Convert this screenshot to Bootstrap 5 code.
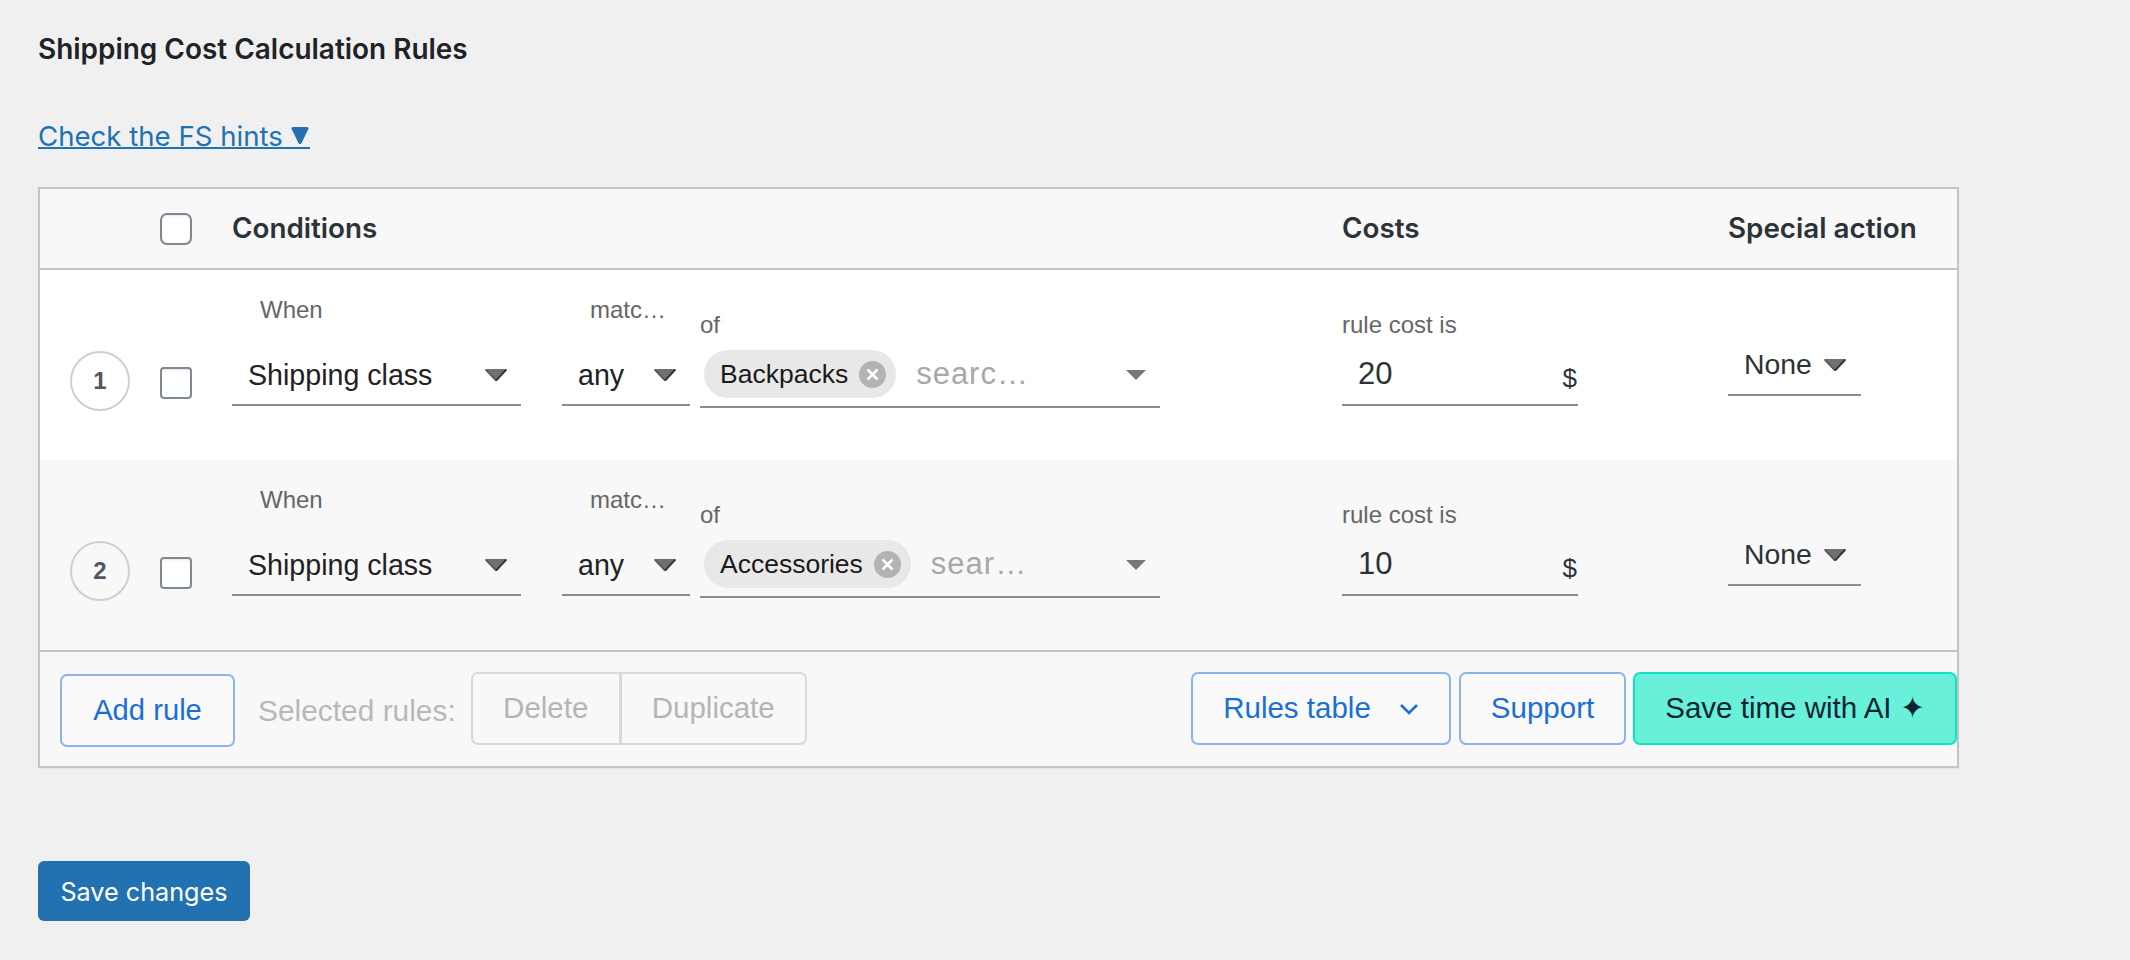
<!DOCTYPE html>
<html lang="en">
<head>
  <meta charset="UTF-8" />
  <meta name="viewport" content="width=device-width, initial-scale=1.0" />
  <title>Shipping Cost Calculation Rules</title>
  <link href="https://cdn.jsdelivr.net/npm/bootstrap@5.3.0/dist/css/bootstrap.min.css" rel="stylesheet">
  <style>
    body {
      background: #f0f0f1;
      color: #1d2327;
      font-family: "Liberation Sans", Arial, sans-serif;
      min-height: 960px;
    }

    .page-wrap {
      padding: 0 0 0 38px;
      width: 1959px;
    }

    .page-title {
      font-family: Inter, sans-serif;
      font-size: 27.95px;
      font-weight: 600;
      line-height: 36px;
      margin: 31px 0 0;
    }

    .hints-link {
      border-bottom: 2px solid #2271b1;
      color: #2271b1;
      display: block;
      font-family: Inter, sans-serif;
      font-size: 27.6px;
      line-height: 22px;
      margin-top: 58px;
      padding-right: 1px;
      text-decoration: none;
      width: fit-content;
    }

    .hints-arrow {
      vertical-align: 1px;
    }

    .rules-box {
      background: #fff;
      border: 2px solid #c3c4c7;
      box-shadow: 0 1px 1px rgba(0, 0, 0, .04);
      margin-top: 38px;
    }

    .rules-head {
      align-items: center;
      background: #f8f8f8;
      border-bottom: 2px solid #c3c4c7;
      color: #2c3338;
      font-family: Inter, sans-serif;
      font-size: 27.8px;
      font-weight: 600;
      height: 81px;
    }

    .rule-line {
      height: 190px;
      padding-top: 26px;
    }

    .rule-line.is-alt { background: #f8f8f8; }

    .col-num { flex: 0 0 120px; padding-left: 30px; }
    .col-check { flex: 0 0 72px; }
    .col-cond { flex: 0 0 1110px; }
    .col-cost { flex: 0 0 386px; }
    .col-special { flex: 0 0 228px; }

    .rule-num {
      align-items: center;
      border: 2px solid #ccd0d4;
      color: #50575e;
      display: flex;
      font-size: 24px;
      font-weight: 700;
      height: 60px;
      justify-content: center;
      margin-top: 55px;
      width: 60px;
    }

    input.rule-check {
      background-color: #fff;
      border: 2.5px solid #7e8993;
      border-radius: 8px;
      box-shadow: inset 0 1px 2px rgba(0, 0, 0, .1);
      height: 32px;
      margin: 0;
      width: 32px;
    }

    .check-down { margin-top: 71px !important; }

    .field-label {
      color: #666;
      font-size: 24px;
      line-height: 28px;
    }

    .when-label { margin-bottom: 16px; padding-left: 28px; }
    .match-label { margin-bottom: 16px; padding-left: 28px; }
    .low-label { margin-bottom: 0; margin-top: 15px; }

    .pick-box {
      align-items: center;
      border-bottom: 2px solid #8c8c8c;
      color: #222;
      display: flex;
      font-size: 28.6px;
      height: 66px;
      justify-content: space-between;
      padding: 6px 14px 0 16px;
    }

    .field-when { width: 289px; margin-right: 41px; }
    .field-match { width: 128px; margin-right: 10px; }
    .field-of { width: 460px; }

    .tags-box {
      align-items: flex-start;
      border-bottom: 2px solid #8c8c8c;
      display: flex;
      height: 69px;
      padding: 11px 14px 0 4px;
    }

    .tag-pill {
      align-items: center;
      background: #e8e8e8;
      border-radius: 24px;
      color: #1a1a1a;
      display: flex;
      font-size: 26.5px;
      gap: 11px;
      height: 48px;
      padding: 2px 10px 0 16px;
    }

    .tag-clear {
      align-items: center;
      background: #b3b3b3;
      border-radius: 50%;
      display: flex;
      height: 27px;
      justify-content: center;
      margin-top: -2px;
      width: 27px;
    }

    .tag-search {
      color: #a8a8a8;
      font-size: 31px;
      letter-spacing: 1px;
      line-height: 48px;
      margin-left: 20px;
    }

    .cost-box {
      border-bottom: 2px solid #8c8c8c;
      color: #2c3338;
      display: flex;
      height: 67px;
      justify-content: space-between;
      width: 236px;
    }

    .cost-value { font-size: 31px; line-height: 48px; padding: 11px 0 0 16px; }
    .cost-unit { font-size: 26px; line-height: 48px; padding: 15px 1px 0 0; }

    .special-pick {
      align-items: center;
      border-bottom: 2px solid #8c8c8c;
      color: #2c3338;
      display: flex;
      font-size: 28.4px;
      gap: 12px;
      height: 66px;
      margin-top: 34px;
      padding: 5px 0 0 16px;
      width: 133px;
    }

    .rules-foot {
      background: #f8f8f8;
      border-top: 2px solid #c3c4c7;
      height: 116px;
      padding: 20px 0 0 20px;
    }

    .btn-line {
      --bs-btn-border-radius: 7px;
      align-items: center;
      background: #f9f9fa;
      border: 2px solid #8db4e8;
      color: #1a6fd6;
      display: inline-flex;
      font-size: 29.5px;
      height: 73px;
      justify-content: center;
      padding: 0;
    }

    .btn-add { font-size: 29.2px; margin-top: 2px; width: 175px; }
    .btn-table { gap: 28px; width: 260px; }
    .btn-support { margin-left: 8px; width: 167px; }

    .btn-ai {
      background: #68f0db;
      border-color: #0fe3c3;
      color: #0b2233;
      margin-left: 7px;
      width: 324px;
    }

    .selected-text {
      color: #b8b8b8;
      font-size: 29.9px;
      line-height: 73px;
      margin: 2px 15px 0 23px;
    }

    .off-group { width: 335px; }

    .btn-group > .btn-off {
      --bs-btn-border-radius: 7px;
      --bs-btn-disabled-bg: transparent;
      --bs-btn-disabled-border-color: #d9d9d9;
      --bs-btn-disabled-color: #b5b5b5;
      --bs-btn-disabled-opacity: 1;
      border-width: 2px;
      font-size: 29.5px;
      height: 73px;
      padding: 0;
    }

    .btn-group > .off-del { flex: 0 0 150px; }
    .btn-group > .off-dup { flex: 0 0 187px; }

    .btn-save {
      background: #2271b1;
      border: 0;
      border-radius: 6px;
      color: #fff;
      font-family: Inter, sans-serif;
      font-size: 25.2px;
      height: 60px;
      margin-top: 93px;
      padding: 3px 0 0;
      width: 212px;
    }
  </style>
</head>
<body>
  <div class="page-wrap">
    <h2 class="page-title">Shipping Cost Calculation Rules</h2>
    <a href="#" class="hints-link">Check the FS hints <svg class="hints-arrow" width="18" height="19" viewBox="0 0 18 19"><path d="M2 1h14a1.5 1.5 0 0 1 1.3 2.2L10.3 17.5a1.5 1.5 0 0 1-2.6 0L.7 3.2A1.5 1.5 0 0 1 2 1z" fill="#2271b1"/></svg></a>

    <div class="rules-box">
      <div class="rules-head d-flex">
        <div class="col-num"></div>
        <div class="col-check d-flex"><input type="checkbox" class="form-check-input rule-check"></div>
        <div class="col-cond">Conditions</div>
        <div class="col-cost">Costs</div>
        <div class="col-special">Special action</div>
      </div>

      <div class="rule-line d-flex">
        <div class="col-num"><div class="rule-num rounded-circle">1</div></div>
        <div class="col-check d-flex"><input type="checkbox" class="form-check-input rule-check check-down"></div>
        <div class="col-cond d-flex">
          <div class="field-when">
            <div class="field-label when-label">When</div>
            <div class="pick-box">Shipping class
              <svg width="22" height="12" viewBox="0 0 22 12"><polygon points="0,0 22,0 11,12" fill="#707070"/><path d="M.7.6 11 11.6" stroke="#555" stroke-width="1.6"/><path d="M21.3.6 11 11.6" stroke="#333" stroke-width="2"/></svg>
            </div>
          </div>
          <div class="field-match">
            <div class="field-label match-label">matc…</div>
            <div class="pick-box">any
              <svg width="22" height="12" viewBox="0 0 22 12"><polygon points="0,0 22,0 11,12" fill="#707070"/><path d="M.7.6 11 11.6" stroke="#555" stroke-width="1.6"/><path d="M21.3.6 11 11.6" stroke="#333" stroke-width="2"/></svg>
            </div>
          </div>
          <div class="field-of">
            <div class="field-label low-label">of</div>
            <div class="tags-box">
              <div class="tag-pill">Backpacks
                <span class="tag-clear"><svg width="15" height="15" viewBox="0 0 15 15"><path d="M2.5 2.5l10 10M12.5 2.5l-10 10" stroke="#fff" stroke-width="2.6"/></svg></span>
              </div>
              <div class="tag-search">searc…</div>
              <svg class="ms-auto mt-3 pt-1" width="20" height="14" viewBox="0 0 20 10"><polygon points="0,0 20,0 10,10" fill="#777"/></svg>
            </div>
          </div>
        </div>
        <div class="col-cost">
          <div class="field-label low-label">rule cost is</div>
          <div class="cost-box"><span class="cost-value">20</span><span class="cost-unit">$</span></div>
        </div>
        <div class="col-special">
          <div class="special-pick">None
            <svg width="22" height="12" viewBox="0 0 22 12"><polygon points="0,0 22,0 11,12" fill="#707070"/><path d="M.7.6 11 11.6" stroke="#555" stroke-width="1.6"/><path d="M21.3.6 11 11.6" stroke="#333" stroke-width="2"/></svg>
          </div>
        </div>
      </div>

      <div class="rule-line is-alt d-flex">
        <div class="col-num"><div class="rule-num rounded-circle">2</div></div>
        <div class="col-check d-flex"><input type="checkbox" class="form-check-input rule-check check-down"></div>
        <div class="col-cond d-flex">
          <div class="field-when">
            <div class="field-label when-label">When</div>
            <div class="pick-box">Shipping class
              <svg width="22" height="12" viewBox="0 0 22 12"><polygon points="0,0 22,0 11,12" fill="#707070"/><path d="M.7.6 11 11.6" stroke="#555" stroke-width="1.6"/><path d="M21.3.6 11 11.6" stroke="#333" stroke-width="2"/></svg>
            </div>
          </div>
          <div class="field-match">
            <div class="field-label match-label">matc…</div>
            <div class="pick-box">any
              <svg width="22" height="12" viewBox="0 0 22 12"><polygon points="0,0 22,0 11,12" fill="#707070"/><path d="M.7.6 11 11.6" stroke="#555" stroke-width="1.6"/><path d="M21.3.6 11 11.6" stroke="#333" stroke-width="2"/></svg>
            </div>
          </div>
          <div class="field-of">
            <div class="field-label low-label">of</div>
            <div class="tags-box">
              <div class="tag-pill">Accessories
                <span class="tag-clear"><svg width="15" height="15" viewBox="0 0 15 15"><path d="M2.5 2.5l10 10M12.5 2.5l-10 10" stroke="#fff" stroke-width="2.6"/></svg></span>
              </div>
              <div class="tag-search">sear…</div>
              <svg class="ms-auto mt-3 pt-1" width="20" height="14" viewBox="0 0 20 10"><polygon points="0,0 20,0 10,10" fill="#777"/></svg>
            </div>
          </div>
        </div>
        <div class="col-cost">
          <div class="field-label low-label">rule cost is</div>
          <div class="cost-box"><span class="cost-value">10</span><span class="cost-unit">$</span></div>
        </div>
        <div class="col-special">
          <div class="special-pick">None
            <svg width="22" height="12" viewBox="0 0 22 12"><polygon points="0,0 22,0 11,12" fill="#707070"/><path d="M.7.6 11 11.6" stroke="#555" stroke-width="1.6"/><path d="M21.3.6 11 11.6" stroke="#333" stroke-width="2"/></svg>
          </div>
        </div>
      </div>

      <div class="rules-foot d-flex align-items-start">
        <button class="btn btn-line btn-add">Add rule</button>
        <span class="selected-text">Selected rules:</span>
        <div class="btn-group off-group">
          <button class="btn btn-off off-del" disabled>Delete</button>
          <button class="btn btn-off off-dup" disabled>Duplicate</button>
        </div>
        <button class="btn btn-line btn-table ms-auto">Rules table
          <svg width="20" height="12" viewBox="0 0 20 12"><path d="M2 2l8 8 8-8" fill="none" stroke="#1a6fd6" stroke-width="2.6"/></svg>
        </button>
        <button class="btn btn-line btn-support">Support</button>
        <button class="btn btn-line btn-ai">Save time with AI ✦</button>
      </div>
    </div>

    <button class="btn btn-save">Save changes</button>
  </div>
  <script src="https://cdn.jsdelivr.net/npm/bootstrap@5.3.0/dist/js/bootstrap.bundle.min.js"></script>
</body>
</html>
